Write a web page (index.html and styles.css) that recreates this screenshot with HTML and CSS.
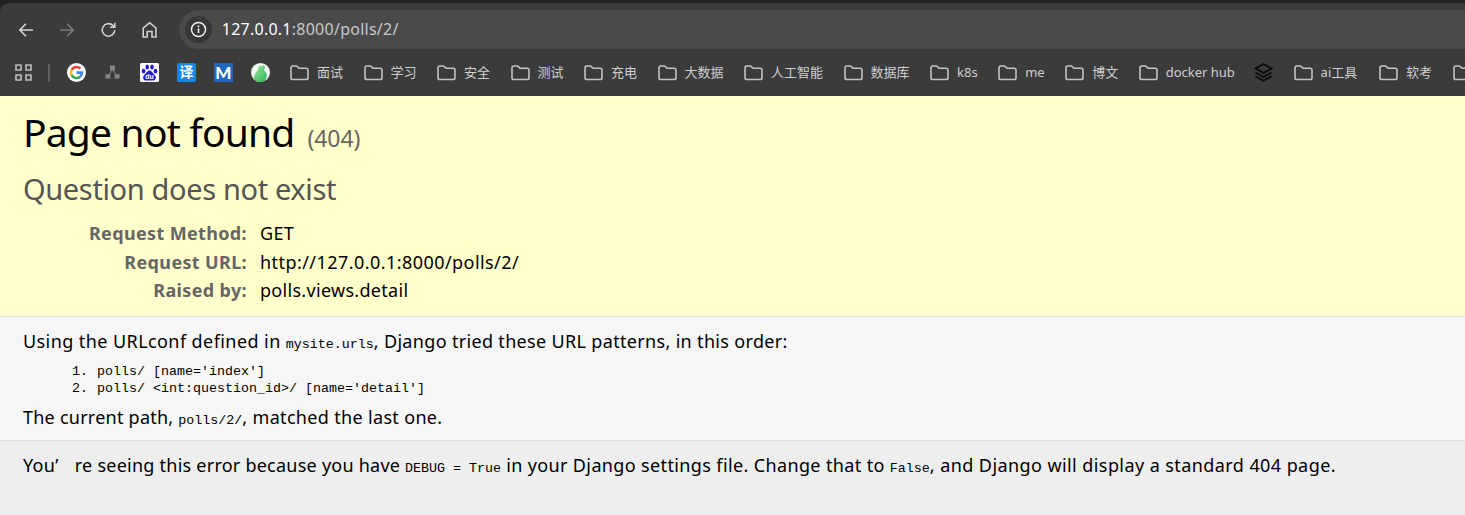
FILE: index.html
```html
<!DOCTYPE html>
<html lang="zh-CN">
<head>
<meta charset="utf-8">
<title>Page not found at /polls/2/</title>
<link rel="stylesheet" href="styles.css">
</head>
<body>
<svg width="0" height="0" class="defs"><symbol id="folder" viewBox="0 0 19 16"><path d="M1 3Q1 1 3 1H6.5L9 3.2H16Q18 3.2 18 5.2V12.7Q18 14.5 16 14.5H3Q1 14.5 1 12.7Z" fill="none" stroke="#c4c4c4" stroke-width="1.6"/></symbol></svg>
<header class="browser">
  <div class="toolbar">
    <svg class="nav" viewBox="0 0 20 20"><path d="M17 10H4M10 3.8L3.8 10L10 16.2"/></svg>
    <svg class="nav dim" viewBox="0 0 20 20"><path d="M3 10H16M10 3.8L16.2 10L10 16.2"/></svg>
    <svg class="nav" viewBox="0 0 20 20"><path d="M16.8 10A6.3 6.3 0 1 1 14.9 5.4L16.5 7M16.8 2.8V7.3H12"/></svg>
    <svg class="nav" viewBox="0 0 20 20"><path d="M3.2 8.1L9.6 2.7L16 8.1V17H12V11.5H7.2V17H3.2Z"/></svg>
    <div class="address">
      <span class="info"><svg width="17" height="17" viewBox="0 0 17 17"><circle cx="8.5" cy="8.5" r="7" fill="none" stroke="#f0f0f0" stroke-width="1.5"/><path d="M8.5 7.5V12M8.5 4.6V6.2" stroke="#f0f0f0" stroke-width="1.6"/></svg></span>
      <span class="url"><span class="host">127.0.0.1</span>:8000/polls/2/</span>
    </div>
  </div>
  <nav class="bookmarks">
    <svg class="apps" viewBox="0 0 17 17"><path d="M1 1H6V6H1ZM11 1H16V6H11ZM1 11H6V16H1ZM11 11H16V16H11Z" fill="none" stroke="#bdbdbd" stroke-width="1.6"/></svg>
    <span class="divider"></span>
    <div class="items">
      <svg class="fav" viewBox="0 0 19 19"><circle cx="9.5" cy="9.5" r="9.5" fill="#fff"/><g fill="none" stroke-width="2.6"><path d="M4.7 6.8A5.5 5.5 0 0 1 13.4 5.6" stroke="#ea4335"/><path d="M4.7 12.2A5.5 5.5 0 0 1 4.7 6.8" stroke="#fbbc05"/><path d="M13.1 13.7A5.5 5.5 0 0 1 4.7 12.2" stroke="#34a853"/><path d="M9.5 9.6H15A5.5 5.5 0 0 1 13.1 13.7" stroke="#4285f4"/></g></svg>
      <svg class="fav" viewBox="0 0 19 19"><path d="M9.5 6L5 14M9.5 6L14 14" stroke="#747474" stroke-width="1.3"/><path d="M7 2.5H12V7.5H7ZM2.5 11.3H7.3V15.5H2.5ZM11.7 11.3H16.5V15.5H11.7Z" fill="#858585"/></svg>
      <svg class="fav" viewBox="0 0 19 19"><rect width="19" height="19" rx="1.5" fill="#fff"/><g fill="#2319dc"><ellipse cx="3.6" cy="8.2" rx="1.8" ry="2.4"/><ellipse cx="7.2" cy="4" rx="1.8" ry="2.6"/><ellipse cx="12" cy="4" rx="1.8" ry="2.6"/><ellipse cx="15.5" cy="8.2" rx="1.8" ry="2.4"/><path d="M9.5 7.5C12 7.5 12.2 10 14.5 11.7C17 14 15.8 17.7 12.7 17.5H6.3C3.2 17.7 2 14 4.5 11.7C6.8 10 7 7.5 9.5 7.5Z"/></g><text x="9.5" y="16" text-anchor="middle" class="du">du</text></svg>
      <span class="fav tile translate">译</span>
      <span class="fav tile letter">M</span>
      <svg class="fav" viewBox="0 0 19 19"><defs><linearGradient id="leaf" x2="1" y2="1"><stop stop-color="#9ce5a2"/><stop offset="1" stop-color="#2eb755"/></linearGradient></defs><circle cx="9.5" cy="9.5" r="9.5" fill="#eef9ef"/><path d="M8 2.2L10 3.5L13 2L14 4.5L13.1 7.2C16.5 10 16.6 13.8 13.8 17.7C10.8 19.7 5.5 19.3 2.6 15.9C3.1 11 5.7 9 7.2 6.2Z" fill="url(#leaf)"/></svg>
      <span class="mark"><svg><use href="#folder"/></svg>面试</span>
      <span class="mark"><svg><use href="#folder"/></svg>学习</span>
      <span class="mark"><svg><use href="#folder"/></svg>安全</span>
      <span class="mark"><svg><use href="#folder"/></svg>测试</span>
      <span class="mark"><svg><use href="#folder"/></svg>充电</span>
      <span class="mark"><svg><use href="#folder"/></svg>大数据</span>
      <span class="mark"><svg><use href="#folder"/></svg>人工智能</span>
      <span class="mark"><svg><use href="#folder"/></svg>数据库</span>
      <span class="mark"><svg><use href="#folder"/></svg>k8s</span>
      <span class="mark"><svg><use href="#folder"/></svg>me</span>
      <span class="mark"><svg><use href="#folder"/></svg>博文</span>
      <span class="mark latin"><svg><use href="#folder"/></svg>docker hub</span>
      <svg class="fav" viewBox="0 0 19 19"><path d="M9.5 1L17.5 5.5L9.5 10L1.5 5.5ZM1.5 9.5L9.5 14L17.5 9.5M1.5 13.3L9.5 17.8L17.5 13.3" fill="none" stroke="#090909" stroke-width="1.8"/></svg>
      <span class="mark"><svg><use href="#folder"/></svg>ai工具</span>
      <span class="mark last"><svg><use href="#folder"/></svg>软考</span>
      <span class="mark"><svg><use href="#folder"/></svg></span>
    </div>
  </nav>
</header>
<main>
  <section class="summary">
    <h1><span class="title">Page not found</span> <small>(404)</small></h1>
    <h2>Question does not exist</h2>
    <dl class="meta">
      <dt>Request Method:</dt><dd>GET</dd>
      <dt>Request URL:</dt><dd class="link">http://127.0.0.1:8000/polls/2/</dd>
      <dt>Raised by:</dt><dd>polls.views.detail</dd>
    </dl>
  </section>
  <section class="patterns">
    <p><span class="wide">Using the URLconf defined in </span><code>mysite.urls</code>, Django tried these URL patterns, in this order:</p>
    <ol>
      <li>polls/ [name='index']</li>
      <li>polls/ &lt;int:question_id&gt;/ [name='detail']</li>
    </ol>
    <p><span class="tight">The current path, </span><code>polls/2/</code>, matched the last one.</p>
  </section>
  <section class="explanation">
    <p>You<span class="apos">’</span><span class="tight">re seeing this error because you have </span><code>DEBUG = True</code><span class="mid"> in your Django settings file. Change that to </span><code>False</code><span class="wide">, and Django will display a standard 404 page.</span></p>
  </section>
</main>
</body>
</html>
```
FILE: styles.css
```css
* { box-sizing: border-box; margin: 0; padding: 0; }
body { height: 515px; overflow: hidden; background: #eee; color: #000; font: 18px "Noto Sans", "Noto Sans CJK SC", sans-serif; display: flex; flex-direction: column; }
.defs { position: absolute; }

.browser { height: 96px; flex: none; background: linear-gradient(#202222 50%, #3b3b3b 50%); padding-top: 3px; }
.toolbar { height: 53px; padding: 7px 0 0 16px; display: flex; align-items: flex-start; background: #3b3b3b; border-top-left-radius: 9px; }
.nav { width: 20px; height: 20px; margin: 9.5px 21.2px 0 0; flex: none; fill: none; stroke: #d2d2d2; stroke-width: 1.6; }
.dim { stroke: #7b7b7b; }
.address { flex: 1; height: 39px; margin-left: -2px; padding-left: 6px; border-radius: 20px 0 0 20px; background: #4a4a4a; display: flex; align-items: center; }
.info { width: 27px; height: 27px; border-radius: 50%; background: #373737; display: flex; align-items: center; justify-content: center; }
.url { margin-left: 10px; font-size: 16px; line-height: 39px; letter-spacing: .25px; color: #c9c9c9; }
.host { color: #fff; }

.bookmarks { height: 40px; display: flex; align-items: center; padding: 0 0 7px 15px; background: #3b3b3b; overflow: hidden; }
.apps { width: 17px; height: 17px; flex: none; }
.divider { width: 2px; height: 18px; margin-left: 16px; background: #606060; flex: none; }
.items { display: flex; align-items: center; gap: 17.8px; margin-left: 16.6px; white-space: nowrap; }
.fav { width: 19px; height: 19px; flex: none; }
.du { font: bold 7px "Liberation Sans", sans-serif; fill: #fff; }
.tile { display: flex; align-items: center; justify-content: center; color: #fff; }
.translate { background: #1684f4; border-radius: 2px; font: bold 14px/17px "Noto Sans CJK SC", sans-serif; padding-bottom: 2px; }
.letter { background: #2468bd; font: 900 17px Lato, sans-serif; }
.mark { height: 20px; display: flex; align-items: center; flex: none; margin-left: 2.7px; font-size: 13px; line-height: 18px; padding-bottom: 1px; color: #cfcfcf; }
.mark svg { width: 19px; height: 16px; margin: 1px 8px 0 0; }
.latin { margin-right: 1.5px; }
.last { margin-left: 4px; }

.summary { height: 221px; padding: 7px 23px 0; background: #ffc; border-bottom: 1px solid #ddd; }
h1 { height: 60px; line-height: 58px; font-size: 39px; font-weight: 400; display: flex; align-items: baseline; }
.title { letter-spacing: -.8px; margin-right: 13px; }
small { font-size: 23px; letter-spacing: -.1px; color: #666; }
h2 { height: 53px; line-height: 52px; font-size: 29px; font-weight: 400; letter-spacing: -.36px; color: #555; }
.meta { display: grid; grid-template-columns: 224px auto; column-gap: 13px; grid-auto-rows: 28.5px; line-height: 28px; margin-top: 3px; letter-spacing: .3px; }
dt { text-align: right; font-weight: 700; color: #666; letter-spacing: .35px; }
.link { letter-spacing: .44px; }

p { letter-spacing: .33px; line-height: 28px; white-space: nowrap; }
.wide { letter-spacing: .42px; }
.mid { letter-spacing: .37px; }
.tight { letter-spacing: .24px; }
code, ol { font: 13.33px "Liberation Mono", monospace; letter-spacing: 0; }
.patterns { height: 124px; padding: 10px 23px 0; background: #f6f6f6; border-bottom: 1px solid #ddd; }
ol { padding: 8px 0 6px 73px; line-height: 17px; }
li { padding-left: 1px; }
.explanation { padding: 10px 23px; }
.apos { display: inline-block; width: 19.5px; }
```
